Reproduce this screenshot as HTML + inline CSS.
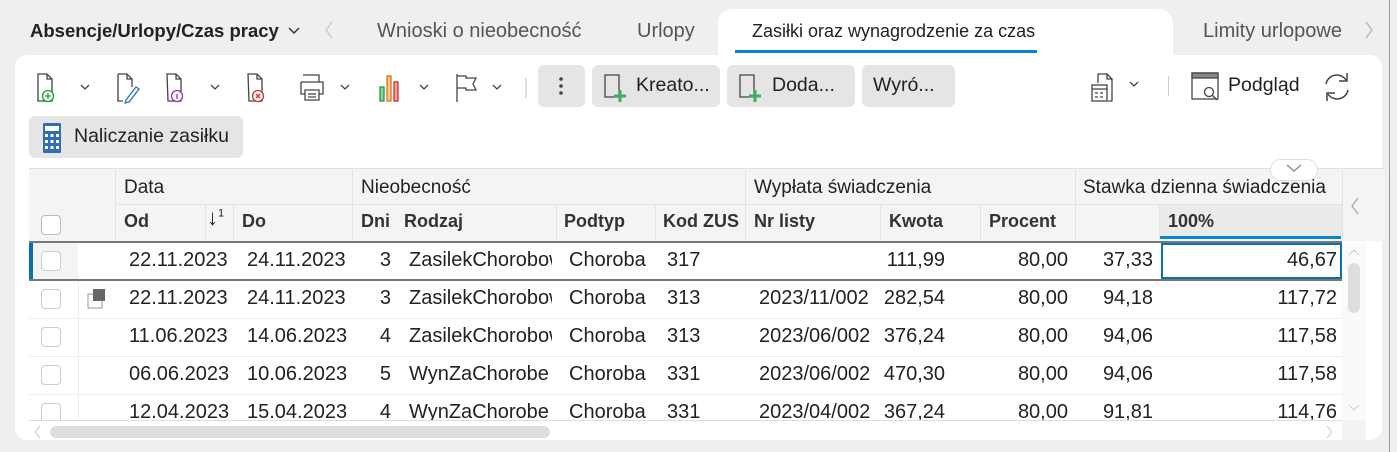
<!DOCTYPE html>
<html><head><meta charset="utf-8"><style>
*{box-sizing:border-box;margin:0;padding:0}
body{width:1397px;height:452px;overflow:hidden;background:#efefef;font-family:"Liberation Sans",sans-serif;font-size:19.5px;color:#222;position:relative}
.a{position:absolute;white-space:nowrap}
.panel{position:absolute;left:15px;top:55px;width:1367px;height:385px;background:#fff;border-radius:12px}
.btn{position:absolute;background:#e5e5e5;border-radius:6px;height:42px;top:65px}
.hdr{background:#f4f4f4}
.cb{position:absolute;width:20px;height:20px;border:1.5px solid #bbb;border-radius:4px;background:#fff}
.r{text-align:right}
.vl{position:absolute;width:1px;background:#e6e6e6}
.h{font-weight:bold;font-size:18px;color:#333}
</style></head><body>
<div class="a" style="left:30px;top:20px;font-weight:bold;font-size:18.5px">Absencje/Urlopy/Czas pracy</div>
<svg class="a" style="left:288px;top:27px" width="12" height="8"><path d="M1 1l5 5 5-5" fill="none" stroke="#333" stroke-width="1.5"/></svg>
<svg class="a" style="left:324px;top:20px" width="10" height="20"><path d="M8 2L2 10l6 8" fill="none" stroke="#ccc" stroke-width="1.5"/></svg>
<div class="a" style="left:377px;top:20px;color:#555;font-size:20px">Wnioski o nieobecność</div>
<div class="a" style="left:637px;top:20px;color:#555;font-size:20px">Urlopy</div>
<div class="a" style="left:718px;top:9px;width:455px;height:50px;background:#fff;border-radius:14px 14px 0 0"></div>
<div class="a" style="left:752px;top:21px;font-size:18px;width:284px;overflow:hidden">Zasiłki oraz wynagrodzenie za czas c<span style="color:#999">h</span><span style="color:#ccc">oroby</span></div>
<div class="a" style="left:735px;top:50px;width:302px;height:3px;background:#0a84d0"></div>
<div class="a" style="left:1203px;top:20px;color:#555;font-size:20px">Limity urlopowe</div>
<svg class="a" style="left:1364px;top:20px" width="10" height="20"><path d="M2 2l6 8-6 8" fill="none" stroke="#bbb" stroke-width="1.5"/></svg>
<div class="a" style="left:1389px;top:0;width:1px;height:452px;background:#999"></div>
<div class="panel"></div>

<svg class="a" style="left:36px;top:72px" width="320" height="32" fill="none" stroke="#444" stroke-width="1.3">
<path d="M2 2h9l5 5v22H2z M11 2v5h5"/><circle cx="12" cy="24" r="5.5" stroke="#1a9e3a" fill="#fff"/><path d="M12 21v6M9 24h6" stroke="#1a9e3a"/>
<path d="M45 13l4 4 4-4"/>
<path d="M82 2h9l5 5v8M82 2v27h5M91 2v5h5"/><path d="M90 28l10-13 3 2-10 13-4 1z" stroke="#2a70c0"/>
<path d="M131 2h9l5 5v22h-13z M140 2v5h5"/><circle cx="141" cy="24" r="5.5" stroke="#8a3ca8" fill="#fff"/><path d="M141 22v5" stroke="#8a3ca8"/>
<path d="M175 13l4 4 4-4"/>
<path d="M212 2h9l5 5v22h-13z M221 2v5h5"/><circle cx="222" cy="24" r="5.5" stroke="#d0302a" fill="#fff"/><path d="M220 22l4 4M224 22l-4 4" stroke="#d0302a"/>
<path d="M267 3h16v7M265 10h22v12h-4M265 10v12h4M269 18h14v10h-14zM272 22h8M272 25h8"/>
<path d="M305 13l4 4 4-4"/>
</svg>
<svg class="a" style="left:378px;top:72px" width="170" height="32" fill="none" stroke="#444" stroke-width="1.3">
<rect x="2" y="15" width="4" height="14" stroke="#1a9e3a" fill="#8fd39f"/><rect x="9" y="4" width="4" height="25" stroke="#e0701a" fill="#f7c98a"/><rect x="16" y="10" width="4" height="19" stroke="#d0302a" fill="#f2a0a0"/>
<path d="M42 13l4 4 4-4"/>
<path d="M79 2v28M79 4h9v2h10l-3 6 3 6h-10v-2h-9"/>
<path d="M115 13l4 4 4-4"/>
<path d="M148 6v20" stroke="#ccc"/>
</svg>
<div class="btn" style="left:538px;width:47px"></div>
<svg class="a" style="left:558px;top:75px" width="6" height="22"><circle cx="3" cy="4" r="1.8" fill="#444"/><circle cx="3" cy="11" r="1.8" fill="#444"/><circle cx="3" cy="18" r="1.8" fill="#444"/></svg>
<div class="btn" style="left:592px;width:128px"></div>
<svg class="a" style="left:603px;top:72px" width="28" height="32" fill="none"><path d="M2 3h14v22H2z" stroke="#444" stroke-width="1.3"/><path d="M17 18v12M11 24h12" stroke="#3cab6a" stroke-width="3"/></svg>
<div class="a" style="left:636px;top:74px;width:76px;overflow:hidden">Kreato...</div>
<div class="btn" style="left:727px;width:128px"></div>
<svg class="a" style="left:738px;top:72px" width="28" height="32" fill="none"><path d="M2 3h14v22H2z" stroke="#444" stroke-width="1.3"/><path d="M17 18v12M11 24h12" stroke="#3cab6a" stroke-width="3"/></svg>
<div class="a" style="left:772px;top:74px">Doda...</div>
<div class="btn" style="left:862px;width:93px"></div>
<div class="a" style="left:873px;top:74px">Wyró...</div>
<svg class="a" style="left:1090px;top:72px" width="60" height="32" fill="none" stroke="#444" stroke-width="1.3"><path d="M8 11V2h9l5 5v22h-4M17 2v5h5"/><rect x="2" y="13" width="15" height="16"/><path d="M2 17h15M5 21h3M10 21h3M5 25h3M10 25h3"/><path d="M40 10l4 4 4-4"/></svg>
<div class="a" style="left:1168px;top:76px;width:1px;height:20px;background:#ccc"></div>
<svg class="a" style="left:1190px;top:71px" width="34" height="32" fill="none" stroke="#444" stroke-width="1.3"><rect x="2" y="2" width="26" height="26"/><rect x="2" y="2" width="26" height="5" fill="#888"/><circle cx="19" cy="21" r="4.5"/><path d="M22 24l5 5"/></svg>
<div class="a" style="left:1228px;top:74px">Podgląd</div>
<svg class="a" style="left:1321px;top:71px" width="32" height="32" fill="none" stroke="#444" stroke-width="1.5"><path d="M5 13a11 11 0 0 1 20-4M27 19a11 11 0 0 1-20 4"/><path d="M26 2v8h-8M6 30v-8h8"/></svg>

<div class="btn" style="left:29px;top:116px;width:214px"></div>
<svg class="a" style="left:42px;top:122px" width="20" height="32"><rect x="1" y="1" width="18" height="30" rx="1" fill="#2f6db5"/><rect x="3" y="4" width="14" height="5" fill="#fff"/><g fill="#fff"><rect x="3" y="12" width="3" height="3"/><rect x="8.5" y="12" width="3" height="3"/><rect x="14" y="12" width="3" height="3"/><rect x="3" y="18" width="3" height="3"/><rect x="8.5" y="18" width="3" height="3"/><rect x="14" y="18" width="3" height="3"/><rect x="3" y="24" width="3" height="3"/><rect x="8.5" y="24" width="3" height="3"/><rect x="14" y="24" width="3" height="3"/></g></svg>
<div class="a" style="left:74px;top:125px">Naliczanie zasiłku</div>

<div class="a hdr" style="left:29px;top:168px;width:1356px;height:73px"></div>
<div class="a" style="left:29px;top:168px;width:1356px;height:1px;background:#e0e0e0"></div>
<div class="vl" style="left:115px;top:170px;height:70px;background:#e2e2e2"></div>
<div class="a" style="left:116px;top:204px;width:1226px;height:1px;background:#e2e2e2"></div>
<div class="vl" style="left:352px;top:170px;height:70px;background:#e2e2e2"></div>
<div class="vl" style="left:745px;top:170px;height:70px;background:#e2e2e2"></div>
<div class="vl" style="left:1075px;top:170px;height:70px;background:#e2e2e2"></div>
<div class="vl" style="left:1342px;top:170px;height:70px;background:#e2e2e2"></div>
<div class="vl" style="left:205px;top:205px;height:35px;background:#e2e2e2"></div>
<div class="vl" style="left:233px;top:205px;height:35px;background:#e2e2e2"></div>
<div class="vl" style="left:556px;top:205px;height:35px;background:#e2e2e2"></div>
<div class="vl" style="left:655px;top:205px;height:35px;background:#e2e2e2"></div>
<div class="vl" style="left:880px;top:205px;height:35px;background:#e2e2e2"></div>
<div class="vl" style="left:980px;top:205px;height:35px;background:#e2e2e2"></div>
<div class="vl" style="left:1159px;top:205px;height:35px;background:#e2e2e2"></div>
<div class="a" style="left:1160px;top:205px;width:182px;height:33px;background:#ebebeb"></div>
<div class="a" style="left:1160px;top:236px;width:181px;height:3px;background:#0a84d0"></div>
<div class="a" style="left:124px;top:177px;font-size:19px">Data</div>
<div class="a" style="left:361px;top:177px;font-size:19px">Nieobecność</div>
<div class="a" style="left:754px;top:177px;font-size:19px">Wypłata świadczenia</div>
<div class="a" style="left:1083px;top:177px;font-size:19px;width:256px;overflow:hidden">Stawka dzienna świadczenia</div>
<div class="a" style="left:1270px;top:159px;width:48px;height:22px;border:1px solid #ddd;border-radius:11px;background:#fff"></div>
<svg class="a" style="left:1286px;top:164px" width="16" height="9"><path d="M1 1l7 6 7-6" fill="none" stroke="#999" stroke-width="1.5"/></svg>
<div class="cb" style="left:41px;top:215px"></div>
<div class="a h" style="left:124px;top:211px">Od</div>
<div class="a" style="left:207px;top:205px;font-size:22px">↓<sup style="font-size:11px">1</sup></div>
<div class="a h" style="left:242px;top:211px">Do</div>
<div class="a h" style="left:361px;top:211px">Dni</div>
<div class="a h" style="left:404px;top:211px">Rodzaj</div>
<div class="a h" style="left:564px;top:211px">Podtyp</div>
<div class="a h" style="left:663px;top:211px;width:82px;overflow:hidden">Kod ZUS</div>
<div class="a h" style="left:754px;top:211px">Nr listy</div>
<div class="a h" style="left:889px;top:211px">Kwota</div>
<div class="a h" style="left:989px;top:211px">Procent</div>
<div class="a h" style="left:1168px;top:211px">100%</div>
<svg class="a" style="left:1350px;top:196px" width="10" height="20"><path d="M8 2L2 10l6 8" fill="none" stroke="#aaa" stroke-width="1.3"/></svg>

<div class="a" style="left:29px;top:241px;width:1313px;height:2px;background:#777"></div>
<div class="a" style="left:29px;top:279px;width:1313px;height:2px;background:#777"></div>
<div class="a" style="left:29px;top:243px;width:4px;height:36px;background:#0a6fb5"></div>
<div class="a" style="left:33px;top:243px;width:45px;height:36px;background:#f4f4f4"></div>
<div class="a" style="left:1161px;top:243px;width:181px;height:36px;border:2px solid #0a6fb5"></div>
<div class="a" style="left:29px;top:318px;width:1313px;height:1px;background:#eee"></div>
<div class="a" style="left:29px;top:356px;width:1313px;height:1px;background:#eee"></div>
<div class="a" style="left:29px;top:394px;width:1313px;height:1px;background:#eee"></div>
<div class="a" style="left:29px;top:420px;width:1313px;height:1px;background:#ddd"></div>
<div class="vl" style="left:78px;top:281px;height:139px;background:#eee"></div>
<div style="position:absolute;left:29px;top:243px;width:1313px;height:177px;overflow:hidden">
<div class="cb" style="left:12px;top:8px;border-color:#ccc"></div>
<div class="cb" style="left:12px;top:46px;border-color:#ccc"></div>
<div class="cb" style="left:12px;top:84px;border-color:#ccc"></div>
<div class="cb" style="left:12px;top:122px;border-color:#ccc"></div>
<div class="cb" style="left:12px;top:160px;border-color:#ccc"></div>
<svg class="a" style="left:57px;top:45px" width="22" height="24"><rect x="2" y="6" width="14" height="14" fill="#fff" stroke="#999"/><rect x="7" y="1" width="12" height="12" fill="#666"/></svg>
</div>
<div style="position:absolute;left:29px;top:243px;width:1313px;height:177px;overflow:hidden;font-size:20px">
<div class="a" style="top:6px;left:0;width:1313px;height:38px">
<span class="a" style="left:100px">22.11.2023</span><span class="a" style="left:218px">24.11.2023</span><span class="a r" style="left:330px;width:32px">3</span><span class="a" style="left:380px;width:143px;overflow:hidden">ZasilekChorobowy</span><span class="a" style="left:540px">Choroba</span><span class="a" style="left:638px">317</span><span class="a r" style="left:796px;width:120px">111,99</span><span class="a r" style="left:950px;width:89px">80,00</span><span class="a r" style="left:1040px;width:84px">37,33</span><span class="a r" style="left:1180px;width:128px">46,67</span></div>
<div class="a" style="top:44px;left:0;width:1313px;height:38px">
<span class="a" style="left:100px">22.11.2023</span><span class="a" style="left:218px">24.11.2023</span><span class="a r" style="left:330px;width:32px">3</span><span class="a" style="left:380px;width:143px;overflow:hidden">ZasilekChorobowy</span><span class="a" style="left:540px">Choroba</span><span class="a" style="left:638px">313</span><span class="a" style="left:730px">2023/11/002</span><span class="a r" style="left:796px;width:120px">282,54</span><span class="a r" style="left:950px;width:89px">80,00</span><span class="a r" style="left:1040px;width:84px">94,18</span><span class="a r" style="left:1180px;width:128px">117,72</span></div>
<div class="a" style="top:82px;left:0;width:1313px;height:38px">
<span class="a" style="left:100px">11.06.2023</span><span class="a" style="left:218px">14.06.2023</span><span class="a r" style="left:330px;width:32px">4</span><span class="a" style="left:380px;width:143px;overflow:hidden">ZasilekChorobowy</span><span class="a" style="left:540px">Choroba</span><span class="a" style="left:638px">313</span><span class="a" style="left:730px">2023/06/002</span><span class="a r" style="left:796px;width:120px">376,24</span><span class="a r" style="left:950px;width:89px">80,00</span><span class="a r" style="left:1040px;width:84px">94,06</span><span class="a r" style="left:1180px;width:128px">117,58</span></div>
<div class="a" style="top:120px;left:0;width:1313px;height:38px">
<span class="a" style="left:100px">06.06.2023</span><span class="a" style="left:218px">10.06.2023</span><span class="a r" style="left:330px;width:32px">5</span><span class="a" style="left:380px;width:143px;overflow:hidden">WynZaChorobe</span><span class="a" style="left:540px">Choroba</span><span class="a" style="left:638px">331</span><span class="a" style="left:730px">2023/06/002</span><span class="a r" style="left:796px;width:120px">470,30</span><span class="a r" style="left:950px;width:89px">80,00</span><span class="a r" style="left:1040px;width:84px">94,06</span><span class="a r" style="left:1180px;width:128px">117,58</span></div>
<div class="a" style="top:158px;left:0;width:1313px;height:38px">
<span class="a" style="left:100px">12.04.2023</span><span class="a" style="left:218px">15.04.2023</span><span class="a r" style="left:330px;width:32px">4</span><span class="a" style="left:380px;width:143px;overflow:hidden">WynZaChorobe</span><span class="a" style="left:540px">Choroba</span><span class="a" style="left:638px">331</span><span class="a" style="left:730px">2023/04/002</span><span class="a r" style="left:796px;width:120px">367,24</span><span class="a r" style="left:950px;width:89px">80,00</span><span class="a r" style="left:1040px;width:84px">91,81</span><span class="a r" style="left:1180px;width:128px">114,76</span></div>
</div>
<div class="a" style="left:1342px;top:243px;width:24px;height:177px;background:#fafafa"></div>
<div class="a" style="left:1348px;top:263px;width:12px;height:50px;background:#ddd;border-radius:6px"></div>
<svg class="a" style="left:1348px;top:248px" width="12" height="8"><path d="M1 7l5-5 5 5" fill="none" stroke="#ccc"/></svg>
<svg class="a" style="left:1348px;top:404px" width="12" height="8"><path d="M1 1l5 5 5-5" fill="none" stroke="#ccc"/></svg>
<div class="a" style="left:50px;top:426px;width:500px;height:12px;background:#ddd;border-radius:6px"></div>
<svg class="a" style="left:34px;top:425px" width="8" height="14"><path d="M6 1L1 7l5 6" fill="none" stroke="#ccc"/></svg>
<svg class="a" style="left:1326px;top:425px" width="8" height="14"><path d="M1 1l5 6-5 6" fill="none" stroke="#ccc"/></svg>
<div class="a" style="left:1342px;top:420px;width:24px;height:20px;background:#f3f3f3"></div>
</body></html>
